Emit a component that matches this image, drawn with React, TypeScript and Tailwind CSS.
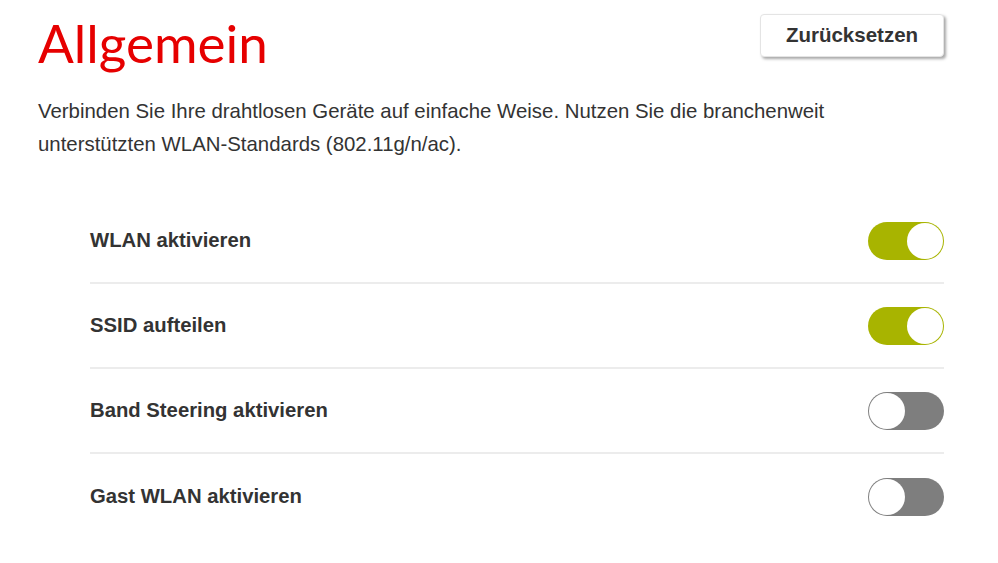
import React from "react";

const rows = [
  { label: "WLAN aktivieren", on: true },
  { label: "SSID aufteilen", on: true },
  { label: "Band Steering aktivieren", on: false },
  { label: "Gast WLAN aktivieren", on: false },
];

function Toggle({ on }: { on: boolean }) {
  return on ? (
    <div className="w-[76px] h-[38px] rounded-full bg-[#a8b400] flex items-center justify-end p-[1px]">
      <div className="w-[36px] h-[36px] rounded-full bg-white" />
    </div>
  ) : (
    <div className="w-[76px] h-[38px] rounded-full bg-[#7e7e7e] flex items-center justify-start p-[1px]">
      <div className="w-[36px] h-[36px] rounded-full bg-white" />
    </div>
  );
}

export default function App() {
  return (
    <div className="w-[998px] h-[563px] bg-white text-[#333] overflow-hidden" style={{ fontFamily: "'Liberation Sans', Arial, sans-serif" }}>
      <div className="pl-[38px] pr-[54px] pt-[10px]">
        <div className="flex justify-between items-start">
          <h1 className="text-[#e60000] text-[53px] leading-[66px] font-normal" style={{ fontFamily: "Lato, 'Open Sans', sans-serif" }}>
            Allgemein
          </h1>
          <button className="mt-[4px] w-[184px] h-[43px] bg-white border border-[#e4e4e4] rounded-[4px] shadow-[2px_2px_3px_rgba(0,0,0,0.35)] text-[20.5px] font-bold text-[#333]">
            Zurücksetzen
          </button>
        </div>
        <p className="mt-[19px] text-[20.4px] leading-[33px] w-[800px]">
          Verbinden Sie Ihre drahtlosen Geräte auf einfache Weise. Nutzen Sie die branchenweit unterstützten WLAN-Standards (802.11g/n/ac).
        </p>
        <div className="mt-[38px] ml-[52px]">
          {rows.map((r, i) => (
            <div
              key={r.label}
              className={`h-[85px] flex items-center justify-between ${i < rows.length - 1 ? "border-b-2 border-[#ececec]" : ""}`}
            >
              <span className="text-[20.3px] font-bold">{r.label}</span>
              <Toggle on={r.on} />
            </div>
          ))}
        </div>
      </div>
    </div>
  );
}
